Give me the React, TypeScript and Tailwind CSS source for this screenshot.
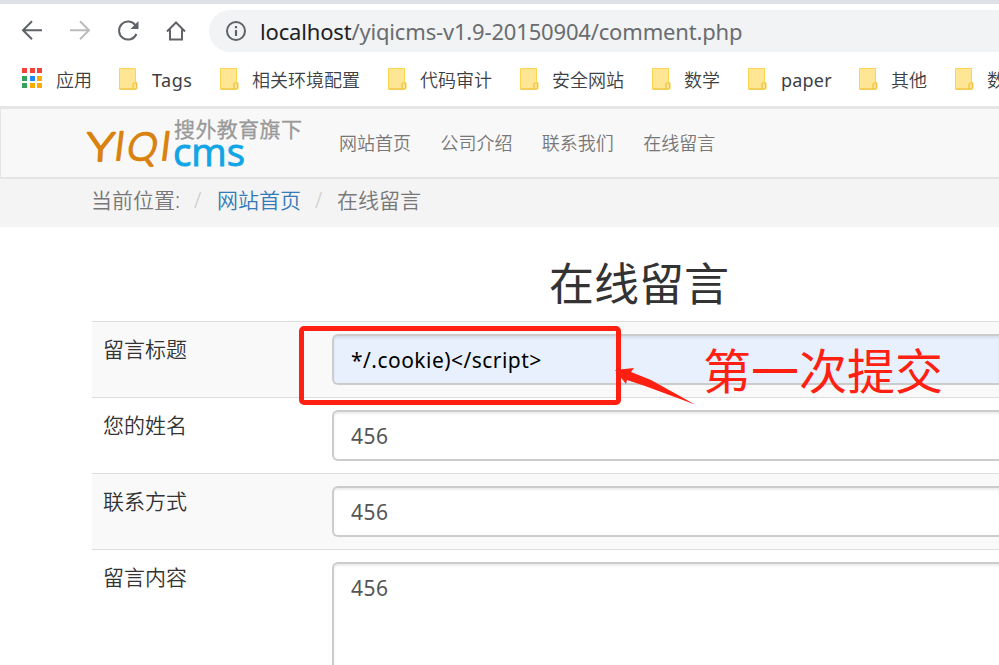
import React from "react";

const bookmarks = [
  { label: "Tags", width: "w-[101px]", spacing: "tracking-[0.5px] ml-[14px]" },
  { label: "相关环境配置", width: "w-[168px]", spacing: "font-[350] ml-[13px]" },
  { label: "代码审计", width: "w-[132px]", spacing: "font-[350] ml-[13px]" },
  { label: "安全网站", width: "w-[132px]", spacing: "font-[350] ml-[13px]" },
  { label: "数学", width: "w-[96px]", spacing: "font-[350] ml-[13px]" },
  { label: "paper", width: "w-[111px]", spacing: "tracking-[0.2px] ml-[14px]" },
  { label: "其他", width: "w-[96px]", spacing: "font-[350] ml-[13px]" },
  { label: "数", width: "w-[96px]", spacing: "font-[350] ml-[13px]" },
];

const appColors = [
  "bg-[#f44336]", "bg-[#f44336]", "bg-[#f44336]",
  "bg-[#34a25c]", "bg-[#1e88f5]", "bg-[#fbac05]",
  "bg-[#34a25c]", "bg-[#fbac05]", "bg-[#fbac05]",
];

const navLinks = ["网站首页", "公司介绍", "联系我们", "在线留言"];

function FolderIcon() {
  return (
    <svg width="19" height="22" viewBox="0 0 19 22" className="shrink-0">
      <path d="M.5.5h16v14h1.500v6.500H.5z" fill="#ffe694" stroke="#fbd751" />
      <path d="M.5 21.200h16.500M14 20.500v-4.500q0-1 1-1h1.500q1 0 1 1v4.500" fill="none" stroke="#efc443" strokeWidth="1.200" />
    </svg>
  );
}

function Toolbar() {
  return (
    <div className="flex h-[56px] items-center pb-[2px]">
      <svg width="209" height="54" viewBox="0 4 209 54" fill="none" stroke="#5f6368" strokeWidth="2" className="shrink-0">
        <path d="M42 30.300H23M32 21.300l-9 9 9 9" />
        <path d="M70 30.300h19M80 21.300l9 9-9 9" stroke="#babcbe" />
        <path d="M135.500 25.500a9 9 0 1 0 .9 8.500" />
        <path d="M138.500 21v8h-8z" fill="#5f6368" stroke="none" />
        <path d="M167 31.500l9-9 9 9M170 29.500v10h12v-10" />
      </svg>
      <div className="flex h-[42px] flex-1 items-center rounded-l-full bg-[#f1f3f4] pl-[17px]">
        <svg width="20" height="20" viewBox="0 0 20 20" fill="none" stroke="#5f6368" strokeWidth="2">
          <circle cx="10" cy="10" r="9" />
          <path d="M10 5v2.200M10 9v6" strokeWidth="2.200" />
        </svg>
        <span className="ml-[14px] text-[22px] leading-[40px] tracking-[-0.17px] whitespace-nowrap text-[#6a6c6f]">
          <span className="text-[#202124]">localhost</span>/yiqicms-v1.9-20150904/comment.php
        </span>
      </div>
    </div>
  );
}

function BookmarksBar() {
  return (
    <div className="flex h-[46px] overflow-hidden pl-[22px] pt-[8px]">
      <div className="flex w-[97px] shrink-0">
        <div className="grid h-5 w-5 grid-cols-3 gap-[2.500px]">
          {appColors.map((c, i) => (
            <span key={i} className={c} />
          ))}
        </div>
        <span className="ml-[14px] text-[18px] font-[350] leading-[25px] text-[#3c4043]">应用</span>
      </div>
      {bookmarks.map((b) => (
        <div key={b.label} className={`flex shrink-0 ${b.width}`}>
          <FolderIcon />
          <span className={`text-[18px] leading-[25px] whitespace-nowrap text-[#3c4043] ${b.spacing}`}>
            {b.label}
          </span>
        </div>
      ))}
    </div>
  );
}

function Logo() {
  return (
    <svg width="230" height="60" viewBox="80 114 230 60" className="shrink-0">
      <g fill="#d9820f" stroke="#d9820f" strokeWidth="2" strokeLinejoin="round" strokeLinecap="round" fontFamily="Lato, sans-serif" fontWeight="300">
        <text transform="translate(86 162) skewX(-3)" fontSize="40" textLength="28" lengthAdjust="spacingAndGlyphs">Y</text>
        <text transform="translate(113 161) skewX(-7)" fontSize="40">I</text>
        <text transform="translate(125 161) skewX(-12)" fontSize="38" textLength="30" lengthAdjust="spacingAndGlyphs">Q</text>
        <text transform="translate(159 161) skewX(-7)" fontSize="40">I</text>
      </g>
      <text x="174" y="138" fontSize="21" textLength="128" fill="#999" stroke="#999" strokeWidth="0.300" fontFamily="'Noto Sans CJK SC', sans-serif">搜外教育旗下</text>
      <text x="173" y="166.500" fontSize="38" textLength="72" lengthAdjust="spacingAndGlyphs" fill="#12a5e6" stroke="#12a5e6" strokeWidth="0.900" fontFamily="'Open Sans', sans-serif">cms</text>
    </svg>
  );
}

function Field({ label, value, striped, filled, tall }: { label: string; value: string; striped?: boolean; filled?: boolean; tall?: boolean }) {
  return (
    <div className={`flex border-t border-[#ddd] pl-[11px] pt-3 ${tall ? "h-[200px]" : "h-[76px]"} ${striped ? "bg-[#f9f9f9]" : "bg-white"}`}>
      <div className="w-[229px] shrink-0 text-[21px] font-[350] leading-[30px] text-[#333]">{label}</div>
      <div className={`flex-1 rounded-l-md border-2 border-r-0 border-[#ccc] pl-[17px] text-[21px] leading-[48px] shadow-[inset_0_2px_2px_rgba(0,0,0,0.075)] ${tall ? "h-[200px]" : "h-[51px]"} ${filled ? "bg-[#e8f0fe] tracking-[0.470px] text-black" : "bg-white tracking-[0.500px] text-[#555]"}`}>
        {value}
      </div>
    </div>
  );
}

function Annotation() {
  return (
    <>
      <div className="absolute left-[299px] top-[326px] h-[79px] w-[322px] rounded-[5px] border-[5px] border-[#ff2011]" />
      <svg className="absolute left-[610px] top-[360px]" width="90" height="50" viewBox="610 360 90 50">
        <path d="M615 370l19-2-3 4 20 8 44 24.500-50-18.500-18-6-1 4z" fill="#ff2011" />
      </svg>
      <div className="absolute left-[703px] top-[336px] text-[48px] leading-[70px] whitespace-nowrap text-[#ff2011]">第一次提交</div>
    </>
  );
}

export default function App() {
  return (
    <div className="relative h-[665px] w-[999px] overflow-hidden bg-white font-['Noto_Sans','Noto_Sans_CJK_SC',sans-serif]">
      <header>
        <div className="h-1 bg-[#dee1e6]" />
        <Toolbar />
        <BookmarksBar />
      </header>
      <nav className="flex h-[73px] items-center border-b-2 border-l border-t-[3px] border-[#e5e5e5] bg-[#f8f8f8] pl-[79px]">
        <Logo />
        <div className="ml-[29px] flex gap-[29.400px] text-[18px] font-[350] leading-[26px] text-[#777]">
          {navLinks.map((n) => (
            <span key={n}>{n}</span>
          ))}
        </div>
      </nav>
      <div className="flex h-[48px] bg-[#f4f4f4] pl-[91px] pt-[6px] text-[21px] font-[350] leading-[30px] text-[#777]">
        <span className="w-[103px]">当前位置:</span>
        <span className="w-[23px] text-[#ccc]">/</span>
        <span className="w-[98px] text-[#337ab7]">网站首页</span>
        <span className="w-[22px] text-[#ccc]">/</span>
        <span>在线留言</span>
      </div>
      <main className="pl-[92px]">
        <h1 className="h-[94px] pl-[457px] pt-[24px] text-[45px] font-normal leading-[66px] text-[#333]">在线留言</h1>
        <Field label="留言标题" value="*/.cookie)</script>" striped filled />
        <Field label="您的姓名" value="456" />
        <Field label="联系方式" value="456" striped />
        <Field label="留言内容" value="456" tall />
      </main>
      <Annotation />
    </div>
  );
}
